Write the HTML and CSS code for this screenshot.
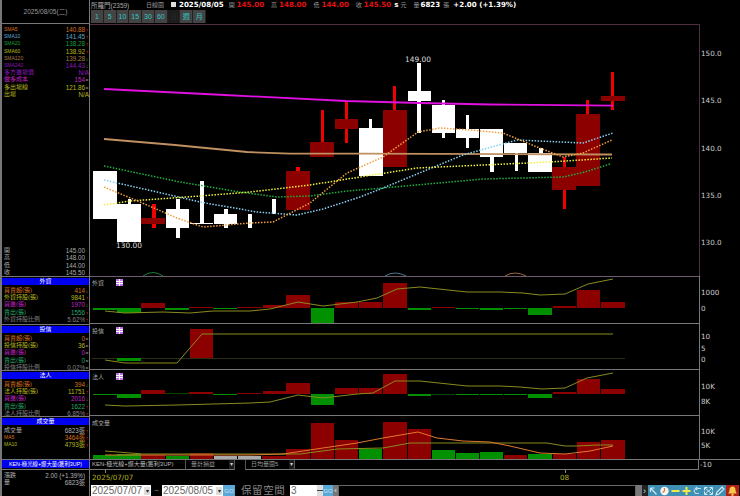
FILE: index.html
```html
<!doctype html>
<html lang="zh-Hant">
<head>
	<meta charset="UTF-8">
	<title>所羅門(2359) 日線圖</title>
	<link rel="stylesheet" href="styles.css">
</head>
<body>
<div class="page">
	<div class="side">
		<div class="sideDate">2025/08/05(二)</div>
		<div class="sideMa">
			<ul class="rows">
				<li class="orange sma"><span>SMA5</span><b>140.88<i class="up">↑</i></b></li>
				<li class="blue sma"><span>SMA10</span><b>141.45<i class="up">↑</i></b></li>
				<li class="green sma"><span>SMA20</span><b>138.28<i class="up">↑</i></b></li>
				<li class="yellow sma"><span>SMA60</span><b>138.92<i class="up">↑</i></b></li>
				<li class="tan sma"><span>SMA120</span><b>139.28<i class="dn">↓</i></b></li>
				<li class="purple sma"><span>SMA240</span><b>144.43<i class="dn">↓</i></b></li>
				<li class="purple"><span>多方進場價</span><b>N/A</b></li>
				<li class="magenta"><span>做多成本</span><b>154<i>=</i></b></li>
				<li class="yellow"><span>多出場線</span><b>121.86<i>=</i></b></li>
				<li class="yellow"><span>出場</span><b>N/A</b></li>
			</ul>
			<ul class="rows ohlc">
				<li><span>開</span><b>145.00</b></li>
				<li><span>高</span><b>148.00</b></li>
				<li><span>低</span><b>144.00</b></li>
				<li><span>收</span><b>145.50</b></li>
			</ul>
		</div>
		<div class="block h48">
			<h2>外資</h2>
			<ul class="rows">
				<li class="orange"><span>買賣超(張)</span><b>414<i class="dn">↓</i></b></li>
				<li class="yellow"><span>外資持股(張)</span><b>9841<i class="up">↑</i></b></li>
				<li class="magenta"><span>買進(張)</span><b>1970<i class="dn">↓</i></b></li>
				<li class="teal"><span>賣出(張)</span><b>1556<i class="up">↑</i></b></li>
				<li class="gray"><span>外資持股比例</span><b>5.62%<i class="up">↑</i></b></li>
			</ul>
		</div>
		<div class="block h46">
			<h2>投信</h2>
			<ul class="rows">
				<li class="orange"><span>買賣超(張)</span><b>0<i>=</i></b></li>
				<li class="yellow"><span>投信持股(張)</span><b>36<i>=</i></b></li>
				<li class="magenta"><span>買進(張)</span><b>0<i>=</i></b></li>
				<li class="teal"><span>賣出(張)</span><b>0<i>=</i></b></li>
				<li class="gray"><span>投信持股比例</span><b>0.02%<i>=</i></b></li>
			</ul>
		</div>
		<div class="block h46">
			<h2>法人</h2>
			<ul class="rows">
				<li class="orange"><span>買賣超(張)</span><b>394<i class="dn">↓</i></b></li>
				<li class="yellow"><span>法人持股(張)</span><b>11751<i class="up">↑</i></b></li>
				<li class="magenta"><span>買進(張)</span><b>2016<i class="dn">↓</i></b></li>
				<li class="teal"><span>賣出(張)</span><b>1622<i class="up">↑</i></b></li>
				<li class="gray"><span>法人持股比例</span><b>6.85%<i class="up">↑</i></b></li>
			</ul>
		</div>
		<div class="block h43">
			<h2>成交量</h2>
			<ul class="rows">
				<li class="light"><span>成交量</span><b>6823張<i class="up">↑</i></b></li>
				<li class="orange sma"><span>MA5</span><b>3464張<i class="up">↑</i></b></li>
				<li class="yellow sma"><span>MA10</span><b>4793張<i class="up">↑</i></b></li>
			</ul>
		</div>
		<div class="block h10"><h2 class="ken">KEN-極光線+爆大量(獲利3UP)</h2></div>
		<div class="block sideFoot">
			<ul class="rows">
				<li class="light"><span>漲跌</span><b>2.00 (+1.39%)</b></li>
				<li class="light"><span>量</span><b>6823張</b></li>
			</ul>
		</div>
	</div>

	<div class="main">
		<div class="head">
			<div class="quote">
				<span class="name">所羅門(2359)</span>
				<span class="lbl mlA">日線圖</span>
				<span class="sq"></span>
				<b class="date">2025/08/05</b>
				<span class="lbl mlB">開</span><b class="red">145.00</b>
				<span class="lbl mlC">高</span><b class="red">148.00</b>
				<span class="lbl mlC">低</span><b class="red">144.00</b>
				<span class="lbl mlC">收</span><b class="red">145.50</b>
				<b class="unit">s</b><span class="lbl">元</span>
				<span class="lbl mlD">量</span><b class="date">6823</b><span class="lbl mlE">張</span>
				<b class="date mlF">+2.00 (+1.39%)</b>
			</div>
			<div class="periods">
				<span>1</span><span>5</span><span>10</span><span>15</span><span>30</span><span>60</span><span class="on">日</span><span>週</span><span>月</span>
			</div>
		</div>

		<svg class="pane" width="650" height="252" viewBox="90 24 650 252">
			<path class="frameTop" d="M90 24.5H699.5V276"/>
			<g class="axis">
				<text x="701" y="56">150.0</text>
				<text x="701" y="103">145.0</text>
				<text x="701" y="151">140.0</text>
				<text x="701" y="198">135.0</text>
				<text x="701" y="245">130.0</text>
			</g>
			<!-- wicks then bodies -->
			<g class="wUp">
				<rect x="152" y="204" width="4" height="24"/>
				<rect x="296" y="167" width="4" height="5"/>
				<rect x="321" y="110" width="3" height="47"/>
				<rect x="345" y="101" width="3" height="42"/>
				<rect x="393" y="86" width="3" height="25"/>
				<rect x="563" y="157" width="3" height="52"/>
				<rect x="586" y="100" width="3" height="16"/>
				<rect x="611" y="72" width="3" height="38"/>
			</g>
			<g class="wDn">
				<rect x="128" y="199" width="3" height="6"/>
				<rect x="176" y="199" width="4" height="39"/>
				<rect x="200" y="181" width="4" height="43"/>
				<rect x="224" y="209" width="4" height="19"/>
				<rect x="248" y="214" width="4" height="14"/>
				<rect x="272" y="199" width="4" height="15"/>
				<rect x="369" y="119" width="3" height="10"/>
				<rect x="417" y="63" width="4" height="70"/>
				<rect x="442" y="100" width="3" height="38"/>
				<rect x="466" y="115" width="3" height="33"/>
				<rect x="490" y="129" width="4" height="43"/>
				<rect x="515" y="143" width="3" height="28"/>
				<rect x="539" y="148" width="4" height="6"/>
			</g>
			<g class="bDn">
				<rect x="93" y="171" width="24" height="48"/>
				<rect x="117" y="204" width="24" height="38"/>
				<rect x="166" y="209" width="23" height="19"/>
				<rect x="190" y="223" width="23" height="1"/>
				<rect x="214" y="214" width="23" height="10"/>
				<rect x="359" y="128" width="24" height="48"/>
				<rect x="408" y="91" width="23" height="10"/>
				<rect x="432" y="105" width="23" height="28"/>
				<rect x="456" y="129" width="23" height="9"/>
				<rect x="480" y="129" width="23" height="28"/>
				<rect x="504" y="143" width="23" height="10"/>
				<rect x="528" y="153" width="24" height="19"/>
			</g>
			<g class="bUp">
				<rect x="141" y="218" width="24" height="6"/>
				<rect x="286" y="171" width="24" height="39"/>
				<rect x="310" y="142" width="24" height="15"/>
				<rect x="335" y="119" width="23" height="10"/>
				<rect x="383" y="110" width="24" height="57"/>
				<rect x="552" y="167" width="24" height="23"/>
				<rect x="576" y="114" width="24" height="72"/>
				<rect x="601" y="96" width="24" height="5"/>
			</g>
			<polyline class="maTan" points="104,139 175,145 247,152 290,153.7 360,153.7 612,154.5"/>
			<polyline class="maPink" points="104,89 225,95 346,101 420,103 490,104.5 613,105.6"/>
			<g class="dots">
				<polyline stroke="#22b040" points="104,166 180,182 240,192 277,197 310,196 347,191 383,188 483,179 563,177 585,172 610,164"/>
				<polyline stroke="#88d0f0" points="104,180 157,192 200,202 257,212 297,215 323,209 360,197 383,188 463,155 517,140 583,143 613,133"/>
				<polyline stroke="#f2f23c" points="104,205 130,201 200,196 250,192 310,185 360,177 417,168 550,162 612,158"/>
				<polyline stroke="#f0a040" points="104,187 140,202 177,218 203,227 250,223 273,222 310,203 347,173 383,157 418,132 440,128 470,130 503,133 537,147 563,157 583,153 612,140"/>
			</g>
			<g class="arcs">
				<path stroke="#1f7a3a" d="M143 276Q153 269 163 276"/>
				<path stroke="#4a7a94" d="M385 276Q395 270 406 276"/>
				<path stroke="#a0683c" d="M505 276Q515 270 526 276"/>
			</g>
			<text class="peak" x="418" y="62" text-anchor="middle">149.00</text>
			<text class="peak" x="129" y="248" text-anchor="middle">130.00</text>
		</svg>

		<div class="subPane">
			<div class="subTitle"><span>外資</span><i class="tbl"></i></div>
			<svg class="pane" width="650" height="48" viewBox="90 276 650 48">
				<path class="frameMid" d="M90 276.500H699"/>
				<path class="frame" d="M90 323.500H699.500M699.500 276V324"/>
				<g class="axis"><text x="701" y="295">1000</text><text x="701" y="311">0</text></g>
				<g class="barDn">
					<rect x="93" y="308" width="24" height="2"/><rect x="117" y="308" width="24" height="5"/>
					<rect x="165" y="308" width="24" height="2"/><rect x="213" y="308" width="24" height="1"/>
					<rect x="311" y="308" width="23" height="15"/><rect x="408" y="308" width="23" height="2"/>
					<rect x="456" y="308" width="23" height="1"/><rect x="480" y="308" width="23" height="2"/>
					<rect x="504" y="308" width="23" height="1"/><rect x="528" y="308" width="24" height="7"/>
				</g>
				<g class="barUp">
					<rect x="141" y="303" width="24" height="5"/><rect x="189" y="307" width="24" height="1"/>
					<rect x="237" y="307" width="24" height="1"/><rect x="263" y="305" width="23" height="3"/>
					<rect x="286" y="295" width="24" height="13"/><rect x="335" y="302" width="23" height="6"/>
					<rect x="359" y="302" width="23" height="6"/><rect x="383" y="283" width="24" height="25"/>
					<rect x="432" y="307" width="23" height="1"/><rect x="553" y="306" width="23" height="2"/>
					<rect x="577" y="290" width="23" height="18"/><rect x="601" y="302" width="24" height="6"/>
				</g>
				<polyline class="lineOlive" points="105,311 125,313 163,312 190,313 213,311 250,311 270,309 298,302 323,306 357,302 377,298 397,289 420,287 467,292 500,292 523,293 540,295 565,294 588,284 613,279"/>
			</svg>
		</div>

		<div class="subPane">
			<div class="subTitle"><span>投信</span><i class="tbl"></i></div>
			<svg class="pane" width="650" height="46" viewBox="90 324 650 46">
				<path class="frame" d="M90 369.500H699.500M699.500 324V370"/>
				<path class="zero" d="M92 358.500H625"/>
				<g class="axis"><text x="701" y="339">10</text><text x="701" y="351">5</text><text x="701" y="362">0</text></g>
				<rect class="barDnFill" x="117" y="358" width="24" height="3"/>
				<rect class="barUpFill" x="190" y="329" width="23" height="29"/>
				<polyline class="lineOlive" points="105,360 125,363 177,363 202,334 290,334 613,334"/>
			</svg>
		</div>

		<div class="subPane">
			<div class="subTitle"><span>法人</span><i class="tbl"></i></div>
			<svg class="pane" width="650" height="46" viewBox="90 370 650 46">
				<path class="frame" d="M90 415.500H699.500M699.500 370V416"/>
				<g class="axis"><text x="701" y="389">10K</text><text x="701" y="404">8K</text></g>
				<g class="barDn">
					<rect x="93" y="394" width="24" height="1"/><rect x="117" y="394" width="24" height="4"/>
					<rect x="213" y="394" width="24" height="1"/><rect x="311" y="394" width="23" height="11"/>
					<rect x="408" y="394" width="23" height="2"/><rect x="456" y="394" width="23" height="1"/>
					<rect x="480" y="394" width="23" height="1"/><rect x="504" y="394" width="23" height="1"/>
					<rect x="528" y="394" width="24" height="4"/>
				</g>
				<g class="barDim"><rect x="165" y="393" width="24" height="1"/><rect x="432" y="394" width="23" height="1"/></g>
				<g class="barUp">
					<rect x="141" y="390" width="24" height="4"/><rect x="189" y="392" width="24" height="2"/>
					<rect x="237" y="393" width="24" height="1"/><rect x="263" y="391" width="23" height="3"/>
					<rect x="286" y="383" width="24" height="11"/><rect x="335" y="388" width="23" height="6"/>
					<rect x="359" y="388" width="23" height="6"/><rect x="383" y="374" width="24" height="20"/>
					<rect x="553" y="392" width="23" height="2"/><rect x="577" y="379" width="23" height="15"/>
					<rect x="601" y="389" width="24" height="5"/>
				</g>
				<polyline class="lineOlive" points="105,405 125,406 177,405 250,403 270,402 298,395 323,398 357,394 373,393 395,381 420,381 467,386 500,386 520,387 542,389 565,388 587,378 613,373"/>
			</svg>
		</div>

		<div class="subPane">
			<div class="subTitle"><span>成交量</span></div>
			<svg class="pane" width="650" height="43" viewBox="90 416 650 43">
				<path class="frame" d="M699.500 416V459"/>
				<g class="axis"><text x="701" y="434">10K</text><text x="701" y="448">5K</text></g>
				<g class="barDn">
					<rect x="93" y="455" width="24" height="4"/><rect x="117" y="454" width="24" height="5"/>
					<rect x="166" y="456" width="23" height="3"/><rect x="359" y="449" width="23" height="10"/>
					<rect x="432" y="450" width="23" height="9"/><rect x="456" y="453" width="23" height="6"/>
					<rect x="480" y="452" width="23" height="7"/><rect x="528" y="454" width="24" height="5"/>
				</g>
				<g class="barGray"><rect x="214" y="456" width="23" height="3"/><rect x="238" y="456" width="23" height="3"/></g>
				<g class="barUp">
					<rect x="141" y="455" width="24" height="4"/><rect x="190" y="453" width="23" height="6"/>
					<rect x="262" y="456" width="24" height="3"/><rect x="286" y="449" width="24" height="10"/>
					<rect x="311" y="423" width="23" height="36"/><rect x="335" y="440" width="23" height="19"/>
					<rect x="383" y="422" width="24" height="37"/><rect x="408" y="429" width="23" height="30"/>
					<rect x="504" y="455" width="23" height="4"/><rect x="553" y="454" width="23" height="5"/>
					<rect x="577" y="442" width="23" height="17"/><rect x="601" y="440" width="24" height="19"/>
				</g>
				<polyline class="lineOlive" points="105,451 143,454 250,454 300,454 337,449 383,448 410,443 457,443 500,443 547,443 565,446 577,446 597,445 613,445"/>
				<polyline class="lineOrange" points="105,455 250,455 283,454 323,448 357,443 383,438 418,432 437,438 463,441 490,442 510,446 540,453 565,454 590,451 613,446"/>
			</svg>
		</div>

		<div class="combo">
			<span class="comboText">KEN-極光線+爆大量(獲利3UP)</span>
			<span class="select w52">量計損益<i>▾</i></span>
			<span class="select w50">日均量圖5<i>▾</i></span>
			<span class="comboFill"></span>
			<span class="comboAxis">-10</span>
		</div>

		<div class="scale">
			<span class="tick first">2025/07/07</span>
			<span class="tick second">08</span>
		</div>

		<div class="controls">
			<span class="input w60">2025/07/07<i class="drop">▾</i></span>
			<span class="tilde">~</span>
			<span class="input w61">2025/08/05<i class="drop">▾</i></span>
			<span class="go">GO</span>
			<span class="keep">保留空間</span>
			<span class="num">3<i class="spin"></i></span>
			<span class="go small">GO</span>
			<span class="back">‹</span>
			<span class="ctrlFill"></span>
			<span class="forward"><i></i>›</span>
			<div class="iconBar">
				<svg width="11" height="12" viewBox="0 0 11 12"><path d="M2.500 3v4M2.500 3h4M2.500 3l6 6.500" fill="none" stroke="#cfe6f2" stroke-width="1.200"/></svg>
				<svg width="11" height="12" viewBox="0 0 11 12"><circle cx="5.500" cy="6" r="4.200" fill="#f4f4f4"/><path d="M5.500 6V3M5.500 6l-2 1.500" fill="none" stroke="#e8742c" stroke-width="1.200"/></svg>
				<svg width="11" height="12" viewBox="0 0 11 12"><path d="M1.500 6h8" stroke="#f2e84a" stroke-width="2"/></svg>
				<svg width="11" height="12" viewBox="0 0 11 12"><path d="M1.500 6h8M5.500 2v8" stroke="#f2e84a" stroke-width="2"/></svg>
				<svg width="11" height="12" viewBox="0 0 11 12"><path d="M9 3.500H3.500L2 6l1.500 2.500H7M3.500 3.500l1.800-1.500M3.500 3.500L5.300 5" fill="none" stroke="#bcdcec" stroke-width="1.100"/></svg>
				<svg width="11" height="12" viewBox="0 0 11 12"><path d="M2 3l7 6M9 3l-7 6M1.500 2.500h3M1.500 2.500v3M9.500 2.500h-3M9.500 2.500v3M1.500 9.500h3M1.500 9.500v-3M9.500 9.500h-3M9.500 9.500v-3" fill="none" stroke="#cfe6f2" stroke-width="1"/></svg>
				<svg width="11" height="12" viewBox="0 0 11 12"><path d="M2 10l1-3 5-5 2 2-5 5z" fill="none" stroke="#dcecf4" stroke-width="1.100"/></svg>
			</div>
			<span class="bell"><svg width="11" height="12" viewBox="0 0 11 12"><path d="M5.500 1.500c-2 0-3 1.500-3 3.500 0 2-1 3-1.500 3.500h9C9.500 8 8.500 7 8.500 5c0-2-1-3.500-3-3.500z" fill="#f6c84a"/><circle cx="5.500" cy="9.800" r="1.200" fill="#f6c84a"/></svg></span>
		</div>
	</div>
</div>
</body>
</html>
```

FILE: styles.css
```css
html, body, div, ul, li, h2, span, b, i {
	margin: 0;
	padding: 0;
}
html, body {
	width: 740px;
	height: 496px;
	overflow: hidden;
	background-color: #000;
}
body {
	font-family: "Liberation Sans", "Noto Sans CJK TC", sans-serif;
	font-size: 6px;
	color: #ccc;
}
ul {
	list-style: none;
}
i {
	font-style: normal;
}
.page {
	display: flex;
	width: 740px;
	height: 496px;
}

/* left column */
.side {
	display: flex;
	flex-direction: column;
	flex: none;
	width: 90px;
	height: 496px;
	box-sizing: border-box;
	border-left: 2px solid #777;
	border-right: 1px solid #777;
}
.sideDate {
	flex: none;
	height: 24px;
	box-sizing: border-box;
	border-bottom: 1px solid #777;
	line-height: 23px;
	text-align: center;
	font-size: 6.6px;
	color: #999;
}
.sideMa {
	display: flex;
	flex-direction: column;
	justify-content: space-between;
	flex: none;
	height: 252px;
	box-sizing: border-box;
	padding: 2px 0 0;
}
.rows li {
	display: flex;
	justify-content: space-between;
	height: 7.2px;
	line-height: 7.2px;
	padding: 0 0 0 2px;
	white-space: nowrap;
}
.rows b {
	font-size: 6.3px;
	font-weight: normal;
}
.rows i {
	display: inline-block;
	width: 4px;
	text-align: center;
	font-size: 5px;
	color: #999;
}
.rows i.up { color: #f02020; }
.rows i.dn { color: #20d040; }
.sma span {
	font-size: 5px;
}
.ohlc li {
	color: #aaa;
	padding-right: 4px;
}
.orange { color: #d8701c; }
.blue { color: #5aa8cc; }
.green { color: #1f9e3a; }
.yellow { color: #b8b81c; }
.tan { color: #a87c40; }
.purple { color: #8a18b8; }
.magenta { color: #c020c0; }
.teal { color: #28a868; }
.gray { color: #808080; }
.light { color: #b0b0b0; }

.block {
	flex: none;
	box-sizing: border-box;
	border-top: 1px solid #777;
	padding-top: 1px;
}
.block h2 {
	height: 7px;
	margin-bottom: 1px;
	line-height: 7px;
	text-align: center;
	font-size: 6px;
	font-weight: normal;
	color: #fff;
	background-color: #0000f0;
}
.block .rows {
	padding-top: 1px;
}
.h48 { height: 48px; }
.h46 { height: 46px; }
.h43 { height: 43px; }
.h10 { height: 10px; padding-top: 0; }
.block h2.ken {
	height: 8px;
	margin: 0;
	line-height: 8px;
	font-size: 5.4px;
	white-space: nowrap;
}
.sideFoot {
	flex: 1;
	padding-top: 1px;
}
.sideFoot .rows li {
	padding-right: 4px;
}

/* quote header */
.main {
	display: flex;
	flex-direction: column;
	width: 650px;
}
.head {
	height: 24px;
	flex: none;
}
.quote {
	display: flex;
	align-items: center;
	height: 9px;
	padding-left: 1px;
	white-space: nowrap;
}
.quote b {
	font-family: "DejaVu Sans", sans-serif;
	font-size: 7.1px;
	font-weight: bold;
}
.name { color: #aaa; font-size: 6.5px; width: 55px; }
.lbl { color: #999; font-size: 6px; }
.mlA { width: 20px; }
.sq {
	width: 5px;
	height: 5px;
	margin: 0 3px 0 5px;
	background-color: #ddd;
}
.quote .date { color: #fff; }
.quote .red { color: #e01010; }
.quote .unit { color: #fff; margin: 0 2px 0 3px; }
.mlB { margin: 0 2px 0 5px; }
.mlC { margin: 0 2px 0 7px; }
.mlD { margin-left: 7px; margin-right: 1px; }
.mlE { margin-left: 3px; }
.mlF { margin-left: 4px; }
.periods {
	display: flex;
	width: 115px;
	height: 13px;
	margin: 1px 0 0 1px;
	background-color: #444;
}
.periods span {
	flex: 1;
	border-right: 1px solid #222;
	line-height: 13px;
	text-align: center;
	font-size: 7px;
	color: #30c8c8;
}
.periods .on {
	color: #2a2a2a;
	background-color: #1c1c1c;
}

/* chart panes */
.pane {
	display: block;
	flex: none;
}
.subPane {
	position: relative;
	flex: none;
}
.subTitle {
	position: absolute;
	top: 2px;
	left: 2px;
	display: flex;
	align-items: center;
	gap: 12px;
	font-size: 6px;
	color: #aaa;
}
.tbl {
	width: 7px;
	height: 7px;
	background:
		linear-gradient(#fff, #fff) 0 2px / 100% 1px no-repeat,
		linear-gradient(#fff, #fff) 0 4px / 100% 1px no-repeat,
		linear-gradient(#fff, #fff) 3px 0 / 1px 100% no-repeat,
		#c070e8;
}
.frameTop {
	fill: none;
	stroke: #4e3040;
}
.frameMid {
	fill: none;
	stroke: #6e5c6e;
}
.frame {
	fill: none;
	stroke: #777;
}
.zero {
	fill: none;
	stroke: #2e2e10;
}
.axis text {
	font-family: "DejaVu Sans", sans-serif;
	font-size: 7.2px;
	fill: #ccc;
}
.peak {
	font-family: "DejaVu Sans", sans-serif;
	font-size: 7.4px;
	fill: #ddd;
}
.wUp { fill: #f00000; }
.wDn, .bDn { fill: #fff; }
.bUp, .barUp, .barUpFill { fill: #8c0000; }
.barDn, .barDnFill { fill: #009000; }
.barDim { fill: #004800; }
.barGray { fill: #aaa; }
.maTan {
	fill: none;
	stroke: #c09060;
	stroke-width: 1.8;
}
.maPink {
	fill: none;
	stroke: #e010e0;
	stroke-width: 1.8;
}
.dots polyline {
	fill: none;
	stroke-width: 1.5;
	stroke-dasharray: 1.5 1.5;
}
.arcs path {
	fill: none;
	stroke-width: 1;
}
.lineOlive {
	fill: none;
	stroke: #8a8a20;
	stroke-width: 1;
}
.lineOrange {
	fill: none;
	stroke: #e07a30;
	stroke-width: 1;
}

/* combo row */
.combo {
	display: flex;
	align-items: stretch;
	flex: none;
	width: 650px;
	height: 11px;
	box-sizing: border-box;
	border-top: 1px solid #777;
	white-space: nowrap;
}
.comboText {
	width: 95px;
	padding-left: 2px;
	box-sizing: border-box;
	line-height: 9px;
	font-size: 6px;
	color: #bbb;
}
.select {
	display: flex;
	justify-content: space-between;
	box-sizing: border-box;
	border-left: 1px solid #555;
	border-right: 1px solid #555;
	padding-left: 5px;
	line-height: 9px;
	font-size: 6px;
	color: #999;
}
.select i {
	width: 5px;
	background-color: #1c1c1c;
	text-align: center;
	color: #ccc;
}
.w52 { width: 50px; margin-right: 10px; }
.w50 { width: 50px; }
.comboFill {
	width: 404px;
	box-sizing: border-box;
	border-bottom: 1px solid #777;
	border-right: 1px solid #777;
}
.comboAxis {
	padding-left: 1px;
	line-height: 10px;
	font-family: "DejaVu Sans", sans-serif;
	font-size: 7.2px;
	color: #ccc;
}
.w52, .w50, .comboText {
	border-bottom: 1px solid #777;
}

/* date scale */
.scale {
	display: flex;
	flex: none;
	height: 15px;
	padding-left: 2px;
}
.tick {
	position: relative;
	padding-top: 4px;
	line-height: 8px;
	font-family: "DejaVu Sans", sans-serif;
	font-size: 7.2px;
	color: #b4b41c;
}
.tick:before {
	content: "";
	position: absolute;
	top: 0;
	width: 1px;
	height: 3px;
	background-color: #888;
}
.first { width: 468px; }
.first:before { left: 13px; }
.second:before { left: 5px; }

/* bottom controls */
.controls {
	display: flex;
	align-items: stretch;
	flex: none;
	height: 12px;
	padding-left: 1px;
	white-space: nowrap;
}
.input, .num {
	position: relative;
	box-sizing: border-box;
	background-color: #fff;
	padding-left: 1px;
	line-height: 12px;
	font-size: 10px;
	color: #666;
	overflow: hidden;
}
.w60 { width: 60px; }
.w61 { width: 61px; }
.drop {
	position: absolute;
	top: 2px;
	right: 1px;
	width: 6px;
	height: 8px;
	background-color: #ddd;
	line-height: 8px;
	text-align: center;
	font-size: 6px;
	color: #222;
}
.tilde {
	width: 11px;
	text-align: center;
	line-height: 12px;
	font-size: 8px;
	color: #999;
}
.go {
	width: 12px;
	background-color: #58a8d8;
	line-height: 12px;
	text-align: center;
	font-size: 6px;
	color: #cfe4f0;
}
.go.small { width: 10px; }
.keep {
	width: 55px;
	padding-left: 6px;
	box-sizing: border-box;
	line-height: 11px;
	font-size: 10.5px;
	letter-spacing: 0.6px;
	color: #888;
}
.num { width: 33px; }
.spin {
	position: absolute;
	top: 0;
	right: 0;
	width: 6px;
	height: 12px;
	background: linear-gradient(#ddd 5px, #444 5px, #444 6px, #ddd 6px);
}
.back {
	width: 5px;
	background-color: #777;
	line-height: 12px;
	text-align: center;
	font-size: 8px;
	color: #eee;
}
.ctrlFill {
	width: 298px;
	box-sizing: border-box;
	border: 1px solid #666;
	border-bottom: 0;
}
.forward {
	display: flex;
	width: 12px;
	line-height: 12px;
	font-size: 9px;
	color: #ddd;
	background-color: #222;
}
.forward i {
	width: 6px;
	margin-right: 1px;
	background-color: #777;
}
.iconBar {
	display: flex;
	width: 78px;
	background-color: #3f8fb4;
}
.bell {
	display: flex;
	justify-content: center;
	width: 13px;
	background-color: #b02018;
}
```
